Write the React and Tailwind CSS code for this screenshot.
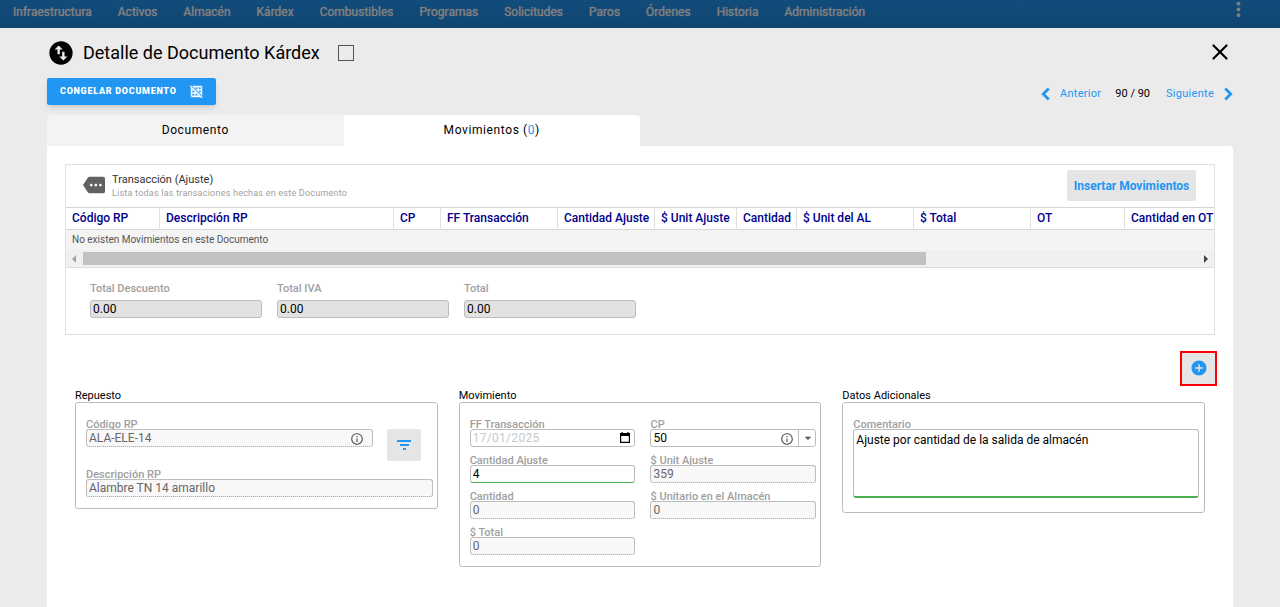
import { useState } from "react";
import { ChevronLeft, ChevronRight, X } from "lucide-react";
import {
  MdAddCircle,
  MdArrowDropDown,
  MdGridOff,
  MdInfoOutline,
  MdMore,
  MdMoreVert,
  MdSwapVerticalCircle,
} from "react-icons/md";

const menu = [
  "Infraestructura", "Activos", "Almacén", "Kárdex", "Combustibles", "Programas",
  "Solicitudes", "Paros", "Órdenes", "Historia", "Administración",
];

const columns = [
  { name: "Código RP", width: "w-[94px]" },
  { name: "Descripción RP", width: "w-[234px]" },
  { name: "CP", width: "w-[47px]" },
  { name: "FF Transacción", width: "w-[117px]" },
  { name: "Cantidad Ajuste", width: "w-[97px]" },
  { name: "$ Unit Ajuste", width: "w-[82px]" },
  { name: "Cantidad", width: "w-[60px]" },
  { name: "$ Unit del AL", width: "w-[117px]" },
  { name: "$ Total", width: "w-[117px]" },
  { name: "OT", width: "w-[94px]" },
  { name: "Cantidad en OT", width: "w-[459px]" },
];

const totals = ["Total Descuento", "Total IVA", "Total"];

const box = "block w-full h-[18px] rounded-[3px] border px-[2px] text-xs leading-4 outline-none";
const readOnlyBox = "border-[#bdbdbd] border-b-[#9e9e9e] [border-bottom-style:dotted] bg-[#f8f8f8] text-[#666]";

function Field({ id, label, className = "", children }) {
  return (
    <div className={className}>
      <label htmlFor={id} className="block pt-[2px] text-[11px] leading-[9px] font-medium text-[#a0a0a0]">{label}</label>
      <div className="relative">{children}</div>
    </div>
  );
}

function ReadOnly({ id, label, value, className }) {
  return (
    <Field id={id} label={label} className={className}>
      <input id={id} readOnly value={value} className={`${box} ${readOnlyBox}`} />
    </Field>
  );
}

function Group({ title, children }) {
  return (
    <section>
      <h2 className="pt-px text-[11px] leading-[13px]">{title}</h2>
      <div className="rounded-[3px] border border-[#bdbdbd] pt-[15px] pr-1 pb-[11px] pl-[10px]">{children}</div>
    </section>
  );
}

export default function App() {
  const [selected, setSelected] = useState(false);
  const [cantidad, setCantidad] = useState("4");
  const [cp, setCp] = useState("50");
  const [comentario, setComentario] = useState("Ajuste por cantidad de la salida de almacén");

  return (
    <div className="min-h-screen flex flex-col bg-[#ebebeb] text-black font-[Roboto,sans-serif]">
      <header className="h-7 pl-[13px] pr-[30px] pb-1 flex items-center justify-between bg-linear-to-b from-[#114c7b] to-[#104572] text-[#808080]">
        <nav className="flex gap-[26px]">
          {menu.map((m) => (
            <a key={m} href="#" className="text-xs leading-4 [text-shadow:0_0_1px_#808080]">{m}</a>
          ))}
        </nav>
        <button aria-label="Más opciones" className="-mt-1.5"><MdMoreVert size={23} /></button>
      </header>

      <main className="flex-1 flex flex-col px-[47px] pt-3">
        <div className="h-[26px] flex items-center">
          <MdSwapVerticalCircle size={28} />
          <h1 className="ml-2 text-lg leading-6">Detalle de Documento Kárdex</h1>
          <input type="checkbox" aria-label="Seleccionar documento" checked={selected}
            onChange={(e) => setSelected(e.target.checked)}
            className="ml-[18px] size-4 appearance-none border border-[#555] checked:bg-[#2196f3]" />
          <button aria-label="Cerrar" className="ml-auto pb-0.5"><X size={26} /></button>
        </div>

        <div className="mt-3 flex items-end justify-between">
          <button className="h-[27px] px-[13px] flex items-center gap-[13px] rounded-[2px] bg-[#2196f3] text-white text-[9px] font-black tracking-[0.08em] shadow-md">
            CONGELAR DOCUMENTO <MdGridOff size={13} stroke="currentColor" strokeWidth={0.5} />
          </button>
          <div className="flex items-center text-[11px] leading-4">
            <a href="#" className="flex items-center gap-[3px] tracking-wide text-[#2196f3]">
              <ChevronLeft size={22} strokeWidth={3} strokeLinecap="butt" strokeLinejoin="miter" /> Anterior
            </a>
            <span className="ml-[14px] mr-4">90 / 90</span>
            <a href="#" className="-mr-1.5 flex items-center gap-[3px] tracking-wide text-[#2196f3]">
              Siguiente <ChevronRight size={22} strokeWidth={3} strokeLinecap="butt" strokeLinejoin="miter" />
            </a>
          </div>
        </div>

        <div className="mt-[10px] flex text-xs tracking-wider">
          <button className="w-1/4 h-[31px] pb-0.5 bg-[#f3f3f3] rounded-tl-[3px]">Documento</button>
          <button className="w-1/4 h-[31px] pb-0.5 bg-white rounded-tr-[3px]">
            Movimientos (<span className="text-[#2196f3]">0</span>)
          </button>
        </div>

        <div className="flex-1 bg-white rounded-tr-[3px] px-[18px] pt-[18px] pb-9">
          <div className="border border-[#e0e0e0]">
            <div className="h-[42px] pl-[17px] pr-[18px] pb-0.5 flex items-center">
              <MdMore size={22} className="text-[#616161]" />
              <div className="ml-[7px] pt-0.5">
                <h2 className="text-[11px] leading-[15px] text-[#333]">Transacción (Ajuste)</h2>
                <p className="text-[9px] leading-[13px] tracking-wide text-[#a0a0a0]">Lista todas las transaciones hechas en este Documento</p>
              </div>
              <button className="ml-auto w-[129px] h-[31px] pt-0.5 rounded-[2px] bg-[#e5e5e5] text-xs font-bold text-[#2196f3]">
                Insertar Movimientos
              </button>
            </div>

            <div className="overflow-x-hidden">
              <table className="w-[1518px] table-fixed border-separate border-spacing-0 text-left">
                <thead>
                  <tr>
                    {columns.map((c) => (
                      <th key={c.name} className={`${c.width} h-[23px] pl-[6px] pb-0.5 border-y border-r border-y-[#d6d6d6] border-r-[#e0e0e0] whitespace-nowrap text-xs leading-4 font-medium text-[#00008b]`}>
                        {c.name}
                      </th>
                    ))}
                  </tr>
                </thead>
                <tbody>
                  <tr>
                    <td colSpan={columns.length} className="h-5 pl-[6px] bg-[#f4f4f4] text-[10px] leading-4 text-[#555]">
                      No existen Movimientos en este Documento
                    </td>
                  </tr>
                </tbody>
              </table>
            </div>
            <div className="h-[18px] flex items-center justify-between bg-[#f0f0f0] border-b border-[#dcdcdc]">
              <svg width="17" height="8" viewBox="0 0 17 8" fill="#a3a3a3"><path d="M10 0v8L6 4z" /></svg>
              <div className="flex-1"><div className="w-[75.7%] h-[13px] bg-[#c1c1c1]" /></div>
              <svg width="17" height="8" viewBox="0 0 17 8" fill="#444"><path d="M7 0v8l4-4z" /></svg>
            </div>

            <div className="flex gap-[15px] pt-[13px] pb-4 pl-6">
              {totals.map((t) => (
                <div key={t} className="w-[172px]">
                  <label htmlFor={t} className="block mb-1 text-[11px] leading-[15px] font-medium text-[#a0a0a0]">{t}</label>
                  <input id={t} readOnly value="0.00" className={`${box} border-[#bdbdbd] bg-[#e2e2e2]`} />
                </div>
              ))}
            </div>
          </div>

          <div className="mt-[18px] flex justify-end">
            <button aria-label="Agregar movimiento" className="w-[33px] h-[31px] pb-px flex items-center justify-center bg-[#e5e5e5] text-[#2196f3] ring-2 ring-[#f00]">
              <MdAddCircle size={18} />
            </button>
          </div>

          <div className="mt-1 px-[10px] grid grid-cols-3 items-start gap-[21px]">
            <Group title="Repuesto">
              <div className="flex gap-[14px] mb-[7px]">
                <Field id="codigo" label="Código RP" className="flex-1">
                  <input id="codigo" readOnly value="ALA-ELE-14" className={`${box} ${readOnlyBox}`} />
                  <MdInfoOutline size={14} className="absolute right-[9px] top-[3px] text-[#555]" />
                </Field>
                <button aria-label="Filtrar" className="mt-[11px] mr-3 w-[34px] h-8 flex items-center justify-center rounded-[2px] bg-[#e5e5e5] text-[#2196f3]">
                  <svg width="14" height="10" viewBox="0 0 14 10" fill="currentColor">
                    <path d="M0 0h14v2H0zM3 4h9v2H3zM6 8h3v2H6z" />
                  </svg>
                </button>
              </div>
              <ReadOnly id="descripcion" label="Descripción RP" value="Alambre TN 14 amarillo" />
            </Group>

            <Group title="Movimiento">
              <div className="grid grid-cols-2 gap-x-[15px] gap-y-[7px]">
                <Field id="fecha" label="FF Transacción">
                  <input id="fecha" readOnly value="17/01/2025" className={`${box} border-[#bdbdbd] tracking-wide text-[#c8c8c8]`} />
                  <svg width="10" height="11" viewBox="0 0 10 11" className="absolute right-[5px] top-[3px]">
                    <path d="M1.5 0h1.2v1h4.6V0h1.2v1H10v10H0V1h1.500zM1.200 4v5.800h7.600V4z" fillRule="evenodd" />
                  </svg>
                </Field>
                <Field id="cp" label="CP">
                  <select id="cp" value={cp} onChange={(e) => setCp(e.target.value)} className={`${box} appearance-none border-[#bdbdbd] bg-white`}>
                    <option>50</option>
                  </select>
                  <MdInfoOutline size={14} className="absolute right-[22px] top-[3px] text-[#555] pointer-events-none" />
                  <span className="absolute right-0 top-0 w-[18px] h-[18px] flex items-center justify-center border-l border-[#bdbdbd] pointer-events-none">
                    <MdArrowDropDown size={16} className="text-[#555]" />
                  </span>
                </Field>
                <Field id="ajuste" label="Cantidad Ajuste">
                  <input id="ajuste" value={cantidad} onChange={(e) => setCantidad(e.target.value)}
                    className={`${box} border-[#bdbdbd] border-b-[#4caf50]`} />
                </Field>
                <ReadOnly id="unitAjuste" label="$ Unit Ajuste" value="359" />
                <ReadOnly id="cantidad" label="Cantidad" value="0" />
                <ReadOnly id="unitario" label="$ Unitario en el Almacén" value="0" />
                <ReadOnly id="total" label="$ Total" value="0" />
              </div>
            </Group>

            <Group title="Datos Adicionales">
              <Field id="comentario" label="Comentario" className="pr-px pb-[3px]">
                <textarea id="comentario" value={comentario} onChange={(e) => setComentario(e.target.value)}
                  className="block w-full h-[69px] resize-none rounded-[3px] border border-[#bdbdbd] border-b-2 border-b-[#4caf50] px-[2px] py-[2px] text-xs leading-4 outline-none" />
              </Field>
            </Group>
          </div>
        </div>
      </main>
    </div>
  );
}
